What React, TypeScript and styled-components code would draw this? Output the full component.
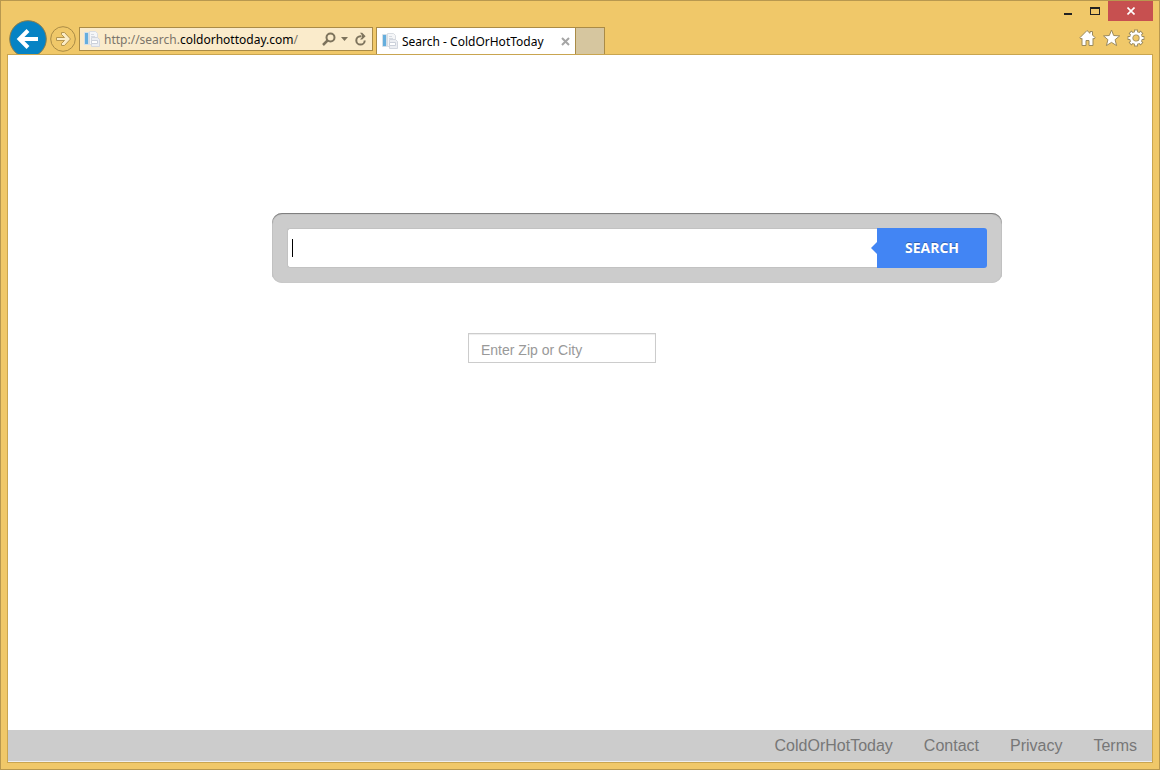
import React, { useState } from "react";
import styled, { createGlobalStyle } from "styled-components";

const GlobalStyle = createGlobalStyle`
  *, *::before, *::after { box-sizing: border-box; }
  body { margin: 0; font-family: "Liberation Sans", Arial, sans-serif; }
  button { padding: 0; border: 0; background: none; font: inherit; cursor: pointer; }
  svg { display: block; }
`;

const uiFont = `"Noto Sans", "Open Sans", sans-serif`;

const BrowserWindow = styled.div`
  min-height: 100vh;
  display: flex;
  flex-direction: column;
  padding: 0 6px 6px;
  background: #f0c869;
  border: 1px solid #b8984f;
`;

const Chrome = styled.header`
  display: flex;
  justify-content: space-between;
  height: 53px;
  font-family: ${uiFont};
  font-size: 12px;
`;

const NavRow = styled.div`
  display: flex;
  align-items: flex-start;
  height: 34px;
  margin-top: 19px;
  padding-left: 2px;
  overflow: hidden;
`;

const ForwardButton = styled.button`
  && { margin: 6px 3px 0; }
`;

const AddressBar = styled.form`
  display: flex;
  align-items: center;
  width: 294px;
  height: 24px;
  margin: 7px 3px 0 0;
  padding: 0 5px 0 4px;
  background: #faebcb;
  border: 1px solid #aa8b46;
`;

const Url = styled.div`
  flex: 1;
  padding: 2px 0 0 4px;
  line-height: 20px;
  white-space: nowrap;
  color: #7b756a;
  b { font-weight: 400; color: #000; }
`;

const AddressButton = styled.button`
  && { margin-left: 5px; }
`;

const Tab = styled.div`
  display: flex;
  align-items: center;
  width: 200px;
  height: 27px;
  margin-top: 7px;
  padding: 0 5px;
  background: #fff;
  border: 1px solid #aa8b46;
  border-bottom: 0;
`;

const TabTitle = styled.span`
  flex: 1;
  padding-left: 4px;
  white-space: nowrap;
  color: #000;
`;

const NewTab = styled.button`
  width: 29px;
  height: 27px;
  && { margin-top: 7px; background: #d6c69f; border: 1px solid #aa8b46; border-width: 1px 1px 0 0; }
`;

const WindowSide = styled.div`
  display: flex;
  flex-direction: column;
  align-items: flex-end;
`;

const CaptionButtons = styled.div`
  display: flex;
`;

const CaptionButton = styled.button<{ $close?: boolean }>`
  display: flex;
  align-items: center;
  justify-content: center;
  width: ${(p) => (p.$close ? 45 : 27)}px;
  height: 20px;
  && { background: ${(p) => (p.$close ? "#c75050" : "transparent")}; }
`;

const Tools = styled.div`
  display: flex;
  gap: 6px;
  padding: 8px 8px 0 0;
`;

const Page = styled.div`
  flex: 1;
  display: flex;
  flex-direction: column;
  background: #fff;
  border: 1px solid #c9a550;
`;

const Main = styled.main`
  flex: 1;
  padding: 158px 0 0 114px;
`;

const Column = styled.div`
  max-width: 730px;
  margin: 0 auto;
`;

const SearchForm = styled.form`
  display: flex;
  height: 70px;
  padding: 15px;
  background: #ccc;
  border-radius: 10px;
  box-shadow: inset 0 1px 1px #777, inset 0 0 1px #aaa;
`;

const SearchField = styled.label`
  flex: 1;
  display: flex;
  align-items: center;
  padding-left: 4px;
  background: #fff;
  border: 1px solid #c2c2c2;
  border-right: 0;
  border-radius: 3px 0 0 3px;
`;

const Caret = styled.span`
  width: 1px;
  height: 18px;
  background: #000;
`;

const SearchInput = styled.input`
  flex: 1;
  min-width: 0;
  height: 36px;
  border: 0;
  outline: 0;
  background: transparent;
  font: 16px "Liberation Sans", Arial, sans-serif;
`;

const SearchButton = styled.button`
  position: relative;
  width: 110px;
  border-radius: 0 3px 3px 0;
  && {
    padding-bottom: 2px;
    background: #4285f4;
    color: #fff;
    font: 700 14px "Open Sans", "Noto Sans", sans-serif;
    text-shadow: 0 -1px 0 rgba(0, 0, 0, 0.3);
  }
  &::before {
    content: "";
    position: absolute;
    left: -6px;
    top: 14px;
    border: 6px solid transparent;
    border-left: 0;
    border-right-color: #4285f4;
  }
`;

const ZipInput = styled.input`
  display: block;
  width: 188px;
  height: 30px;
  margin: 50px 0 0 196px;
  padding: 4px 12px 0;
  border: 1px solid #ccc;
  border-radius: 0;
  box-shadow: inset 0 1px 1px rgba(0, 0, 0, 0.075);
  font: 14px "Liberation Sans", Arial, sans-serif;
  color: #555;
  &::placeholder { color: #999; opacity: 1; }
`;

const Footer = styled.footer`
  display: flex;
  justify-content: flex-end;
  gap: 31px;
  height: 32px;
  padding-right: 15px;
  background: #ccc;
  border-bottom: 1px solid #eee;
`;

const FooterLink = styled.a`
  font-size: 16px;
  line-height: 31px;
  color: #777;
  text-decoration: none;
`;

const PageIcon = () => (
  <svg width="16" height="16" viewBox="0 0 16 16" aria-hidden="true">
    <path d="M5.500.5h6l2 2v11h-8z" fill="#f5f6f8" stroke="#d9dde2" />
    <path d="M.5 1.500h4v12h-4z" fill="#e4eef5" stroke="#d3dfe8" />
    <path d="M1 2h3v11H1z" fill="#65aedd" />
    <path d="M7 3.500h3M7 5.500h4" stroke="#d6dbe2" />
    <path d="M7.500 6.500h6l2 2v7h-8z" fill="#eceef2" stroke="#d3d7df" />
    <path d="M7.500 9.500h6v3h-6z" fill="#fff" stroke="#cbd0da" />
  </svg>
);

export default function App() {
  const [query, setQuery] = useState("");
  return (
    <>
      <GlobalStyle />
      <BrowserWindow>
        <Chrome>
          <NavRow>
            <button type="button" aria-label="Back">
              <svg width="38" height="38" viewBox="0 0 38 38">
                <circle cx="19" cy="19" r="18.300" fill="#0683c4" stroke="#8b7d4c" />
                <path d="M11 19h18M19 10.500L10.500 19l8.500 8.500" fill="none" stroke="#fff" strokeWidth="4" />
              </svg>
            </button>
            <ForwardButton type="button" aria-label="Forward">
              <svg width="26" height="26" viewBox="0 0 26 26">
                <circle cx="13" cy="13" r="12.300" fill="#f0c869" stroke="#aa8b46" />
                <path d="M6.500 11.500h8L11.500 8.500V6.500h3L20.500 13l-6 6.500h-3v-2l3-3h-8z" fill="#fbecc6" stroke="#b5964f" />
              </svg>
            </ForwardButton>
            <AddressBar onSubmit={(e) => e.preventDefault()}>
              <PageIcon />
              <Url>http://search.<b>coldorhottoday.com</b>/</Url>
              <AddressButton type="button" aria-label="Search">
                <svg width="14" height="14" viewBox="0 0 14 14" fill="none" stroke="#7d735c">
                  <circle cx="8.500" cy="5.500" r="4" strokeWidth="2" />
                  <path d="M5.500 8.500L1 13" strokeWidth="2.500" />
                </svg>
              </AddressButton>
              <AddressButton type="button" aria-label="Show address list">
                <svg width="7" height="4" viewBox="0 0 7 4"><path d="M0 0h7L3.500 4z" fill="#7d735c" /></svg>
              </AddressButton>
              <AddressButton type="button" aria-label="Refresh">
                <svg width="14" height="14" viewBox="0 0 14 14">
                  <path d="M8.500 4.200H7.500A4.200 4.200 0 1 0 11.700 8.400" fill="none" stroke="#7d735c" strokeWidth="2" />
                  <path d="M7 .8h2.200L12.600 4.200 9.200 7.600H7l2-2.400V3.200z" fill="#7d735c" />
                </svg>
              </AddressButton>
            </AddressBar>
            <Tab>
              <PageIcon />
              <TabTitle>Search - ColdOrHotToday</TabTitle>
              <button type="button" aria-label="Close tab">
                <svg width="9" height="9" viewBox="0 0 9 9"><path d="M1 1l7 7M8 1L1 8" stroke="#a5a5a5" strokeWidth="2" /></svg>
              </button>
            </Tab>
            <NewTab type="button" aria-label="New tab" />
          </NavRow>
          <WindowSide>
            <CaptionButtons>
              <CaptionButton type="button" aria-label="Minimize">
                <svg width="8" height="10" viewBox="0 0 8 10"><path d="M0 7h8v2H0z" fill="#222" /></svg>
              </CaptionButton>
              <CaptionButton type="button" aria-label="Maximize">
                <svg width="10" height="8" viewBox="0 0 10 8"><path d="M0 0h10v8H0zM1 2v5h8V2z" fill="#222" fillRule="evenodd" /></svg>
              </CaptionButton>
              <CaptionButton type="button" aria-label="Close" $close>
                <svg width="8" height="8" viewBox="0 0 8 8"><path d="M.5.5l7 7M7.500.5l-7 7" stroke="#fff" strokeWidth="1.600" /></svg>
              </CaptionButton>
            </CaptionButtons>
            <Tools>
              <button type="button" aria-label="Home">
                <svg width="18" height="18" viewBox="0 0 18 18" fill="#fff" stroke="#9b8a5d">
                  <path d="M8 1.500L.8 8.800l1.200 1.300 1-.8v7.200h4v-5h3v5h4V9.300l1 .8 1.200-1.300L13.500 6V2.500h-2.500v1.800z" />
                </svg>
              </button>
              <button type="button" aria-label="Favorites">
                <svg width="18" height="18" viewBox="0 0 18 18" fill="#fff" stroke="#9b8a5d">
                  <path d="M8.500 1l2.200 5.500 6 .4-4.600 3.800 1.500 5.900-5.100-3.200-5.100 3.200 1.500-5.900L.5 6.900l5.800-.4z" />
                </svg>
              </button>
              <button type="button" aria-label="Tools">
                <svg width="18" height="18" viewBox="0 0 18 18">
                  <g fill="none" stroke="#9b8a5d">
                    <circle cx="9" cy="9" r="4.700" strokeWidth="4" />
                    <path d="M9 .6v3M9 14.400v3M.6 9h3M14.400 9h3M3 3l2 2M13 13l2 2M15 3l-2 2M5 13l-2 2" strokeWidth="4" />
                  </g>
                  <g fill="none" stroke="#fff">
                    <circle cx="9" cy="9" r="4.800" strokeWidth="2.400" />
                    <path d="M9 1.400v3M9 13.600v3M1.400 9h3M13.600 9h3M3.600 3.600l2 2M12.400 12.400l2 2M14.400 3.600l-2 2M5.600 12.400l-2 2" strokeWidth="2.200" />
                  </g>
                </svg>
              </button>
            </Tools>
          </WindowSide>
        </Chrome>
        <Page>
          <Main>
            <Column>
              <SearchForm onSubmit={(e) => e.preventDefault()}>
                <SearchField>
                  <Caret />
                  <SearchInput
                    aria-label="Search the web"
                    value={query}
                    onChange={(e) => setQuery(e.target.value)}
                  />
                </SearchField>
                <SearchButton type="submit">SEARCH</SearchButton>
              </SearchForm>
              <ZipInput aria-label="Zip or city" placeholder="Enter Zip or City" />
            </Column>
          </Main>
          <Footer>
            <FooterLink href="#home">ColdOrHotToday</FooterLink>
            <FooterLink href="#contact">Contact</FooterLink>
            <FooterLink href="#privacy">Privacy</FooterLink>
            <FooterLink href="#terms">Terms</FooterLink>
          </Footer>
        </Page>
      </BrowserWindow>
    </>
  );
}
